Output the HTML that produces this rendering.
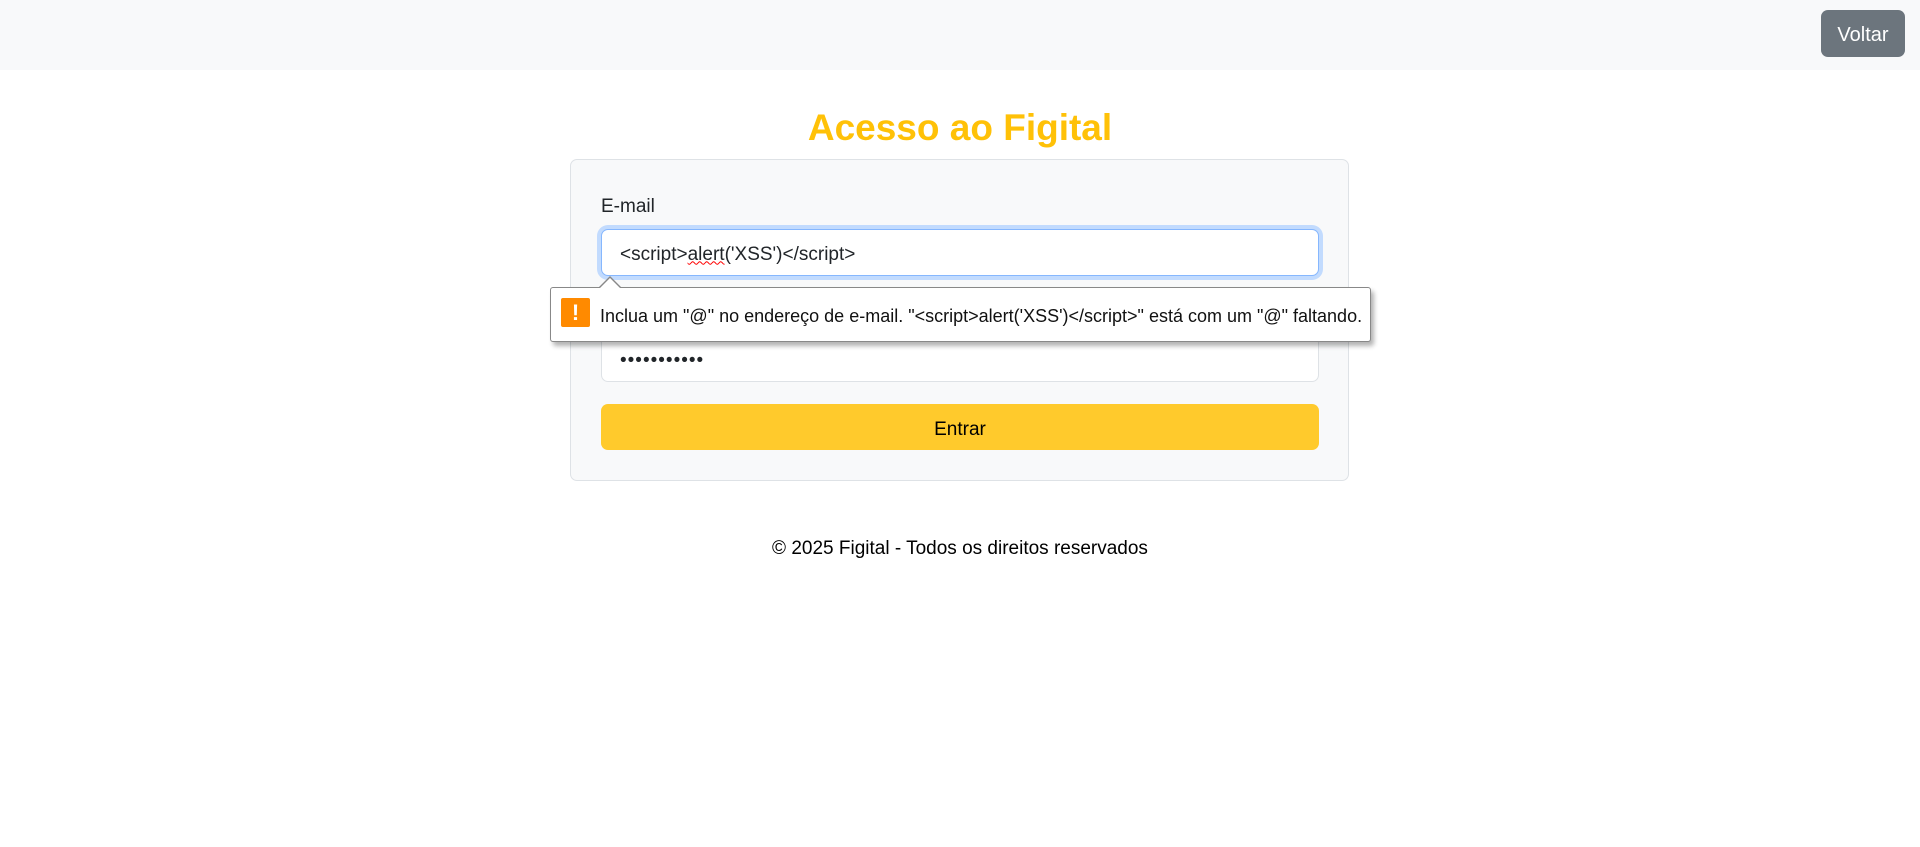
<!DOCTYPE html>
<html><head><meta charset="utf-8"><style>
*{box-sizing:border-box;margin:0;padding:0}
body{width:1920px;height:847px;background:#fff;font-family:"Liberation Sans",sans-serif;color:#212529;position:relative;overflow:hidden}
.hdr{position:absolute;left:0;top:0;width:1920px;height:70px;background:#f8f9fa}
.btn{position:absolute;left:1821px;top:10px;width:84px;height:47px;background:#6c757d;color:#fff;border-radius:7px;font-size:20px;display:flex;align-items:center;justify-content:center;padding-top:4px}
h1{position:absolute;left:0;width:1920px;top:103px;text-align:center;color:#ffc107;font-size:37px;font-weight:bold;line-height:50px}
.card{position:absolute;left:570px;top:159px;width:779px;height:322px;background:#f8f9fa;border:1px solid #dee2e6;border-radius:7px}
.lbl{position:absolute;left:601px;top:196px;font-size:19px}
.in{position:absolute;left:601px;width:718px;background:#fff;border:1px solid #dee2e6;border-radius:7px;font-size:19px;padding-left:18px;display:flex;align-items:center;padding-top:4px}
.focus{top:229px;height:47px;border:1px solid #86b7fe;box-shadow:0 0 0 4px #c2dbfe}
.pw{top:336px;height:46px;letter-spacing:1px}
.sub{position:absolute;left:601px;top:404px;width:718px;height:46px;background:#ffca2c;border-radius:7px;font-size:19px;display:flex;align-items:center;justify-content:center;color:#000;padding-top:5px}
.tip{position:absolute;left:550px;top:287px;width:821px;height:55px;background:#fff;border:1px solid #888;border-radius:3px;box-shadow:3px 4px 5px rgba(0,0,0,.3);font-size:18px;display:flex;align-items:center;padding-left:49px;color:#111;white-space:nowrap;padding-top:3px}
.ic{position:absolute;left:10px;top:10px;width:29px;height:29px;background:#ff8a00;border-radius:2px;color:#fff;font-weight:bold;font-size:22px;text-align:center;line-height:29px}
.arr{position:absolute;left:598px;top:276px;width:0;height:0;border-left:12px solid transparent;border-right:12px solid transparent;border-bottom:12px solid #888}
.arr2{position:absolute;left:599px;top:278px;width:0;height:0;border-left:11px solid transparent;border-right:11px solid transparent;border-bottom:11px solid #fff}
.ft{position:absolute;left:0;width:1920px;top:538px;text-align:center;font-size:19px;color:#000}
u{text-decoration:underline wavy red;text-decoration-thickness:1px}
</style></head><body>
<div class="hdr"></div><div class="btn">Voltar</div>
<h1>Acesso ao Figital</h1>
<div class="card"></div>
<div class="lbl">E-mail</div>
<div class="in focus">&lt;script&gt;<u>alert</u>('XSS')&lt;/script&gt;</div>
<div class="in pw">•••••••••••</div>
<div class="sub">Entrar</div>
<div class="arr"></div><div class="tip"><div class="ic">!</div>Inclua um "@" no endereço de e-mail. "&lt;script&gt;alert('XSS')&lt;/script&gt;" está com um "@" faltando.</div><div class="arr2"></div>
<div class="ft">© 2025 Figital - Todos os direitos reservados</div>
</body></html>
